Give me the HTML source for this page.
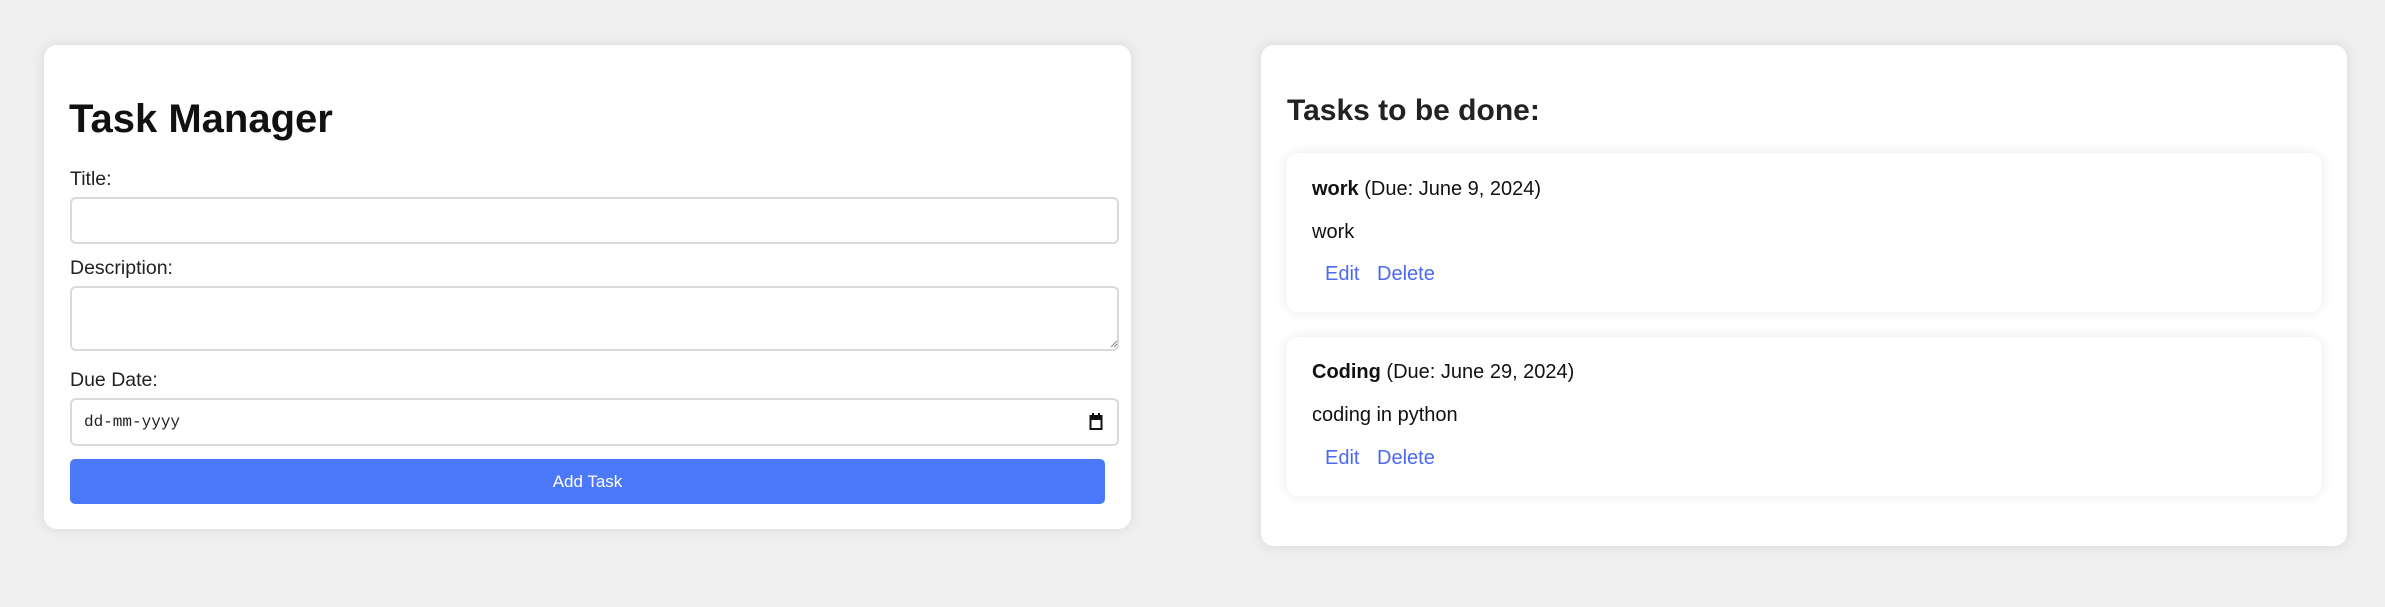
<!DOCTYPE html>
<html><head><meta charset="utf-8"><style>
*{box-sizing:border-box;margin:0;padding:0}
body{width:2385px;height:607px;background:#f0f0f0;font-family:"Liberation Sans",Arial,sans-serif;position:relative;overflow:hidden}
.card{position:absolute;background:#fff;border-radius:13px;box-shadow:0 0 14px rgba(0,0,0,0.1)}
.abs{position:absolute;white-space:nowrap}
.lbl{font-size:19.5px;color:#222}
.inp{position:absolute;left:70px;width:1049px;border:2px solid #dadada;border-radius:6px;background:#fff}
.task{position:absolute;left:1286px;width:1036px;background:#fff;border-radius:12px;box-shadow:0 0 12px rgba(0,0,0,0.09)}
.t{font-size:20px;color:#111}
.lnk{font-size:20px;color:#4a69f5}
</style></head><body>
<div class="card" style="left:44px;top:45px;width:1087px;height:484px"></div>
<div class="abs" style="left:69px;top:97px;font-size:40px;font-weight:bold;color:#111">Task Manager</div>
<div class="abs lbl" style="left:70px;top:168px">Title:</div>
<div class="inp" style="top:197px;height:47px"></div>
<div class="abs lbl" style="left:70px;top:257px">Description:</div>
<div class="inp" style="top:286px;height:65px"></div>
<svg class="abs" style="left:1110px;top:340px" width="8" height="8"><path d="M1 7L7 1M4 7L7 4" stroke="#888" stroke-width="1"/></svg>
<div class="abs lbl" style="left:70px;top:369px">Due Date:</div>
<div class="inp" style="top:398px;height:48px"></div>
<div class="abs" style="left:84px;top:413px;font-family:'Liberation Mono',monospace;font-size:16px;color:#222">dd-mm-yyyy</div>
<svg class="abs" style="left:1089px;top:413px" width="14" height="18"><rect x="1.5" y="3" width="11" height="13" fill="none" stroke="#111" stroke-width="2"/><rect x="1" y="3" width="12" height="4" fill="#111"/><rect x="3" y="0" width="2" height="4" fill="#111"/><rect x="9" y="0" width="2" height="4" fill="#111"/></svg>
<div class="abs" style="left:70px;top:459px;width:1035px;height:45px;background:#4a78f9;border-radius:5px;color:#fff;font-size:17px;line-height:45px;text-align:center">Add Task</div>

<div class="card" style="left:1261px;top:45px;width:1086px;height:501px"></div>
<div class="abs" style="left:1287px;top:94px;font-size:30px;font-weight:bold;color:#222">Tasks to be done:</div>

<div class="task" style="top:153px;height:159px"></div>
<div class="abs t" style="left:1312px;top:178px"><b>work</b> (Due: June 9, 2024)</div>
<div class="abs t" style="left:1312px;top:221px">work</div>
<div class="abs lnk" style="left:1325px;top:263px">Edit</div>
<div class="abs lnk" style="left:1377px;top:263px">Delete</div>

<div class="task" style="top:337px;height:159px"></div>
<div class="abs t" style="left:1312px;top:361px"><b>Coding</b> (Due: June 29, 2024)</div>
<div class="abs t" style="left:1312px;top:404px">coding in python</div>
<div class="abs lnk" style="left:1325px;top:447px">Edit</div>
<div class="abs lnk" style="left:1377px;top:447px">Delete</div>
</body></html>
